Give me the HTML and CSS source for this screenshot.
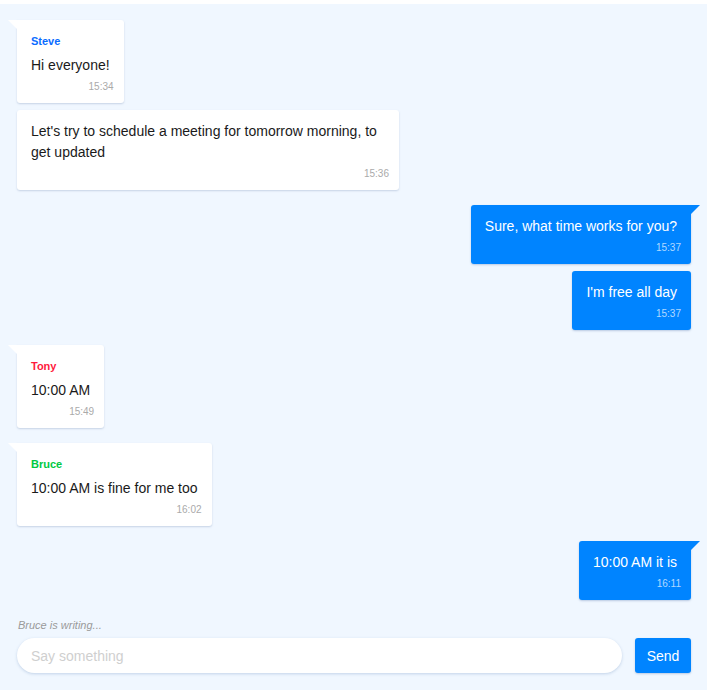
FILE: index.html
```html
<!DOCTYPE html>
<html lang="en">
<head>
<meta charset="utf-8">
<title>Chat</title>
<link rel="stylesheet" href="styles.css">
</head>
<body>
<div class="chat">
  <div class="messages">
    <div class="msg received tail">
      <div class="name steve">Steve</div>
      <div class="text">Hi everyone!</div>
      <div class="time">15:34</div>
    </div>
    <div class="msg received wide follow">
      <div class="text">Let's try to schedule a meeting for tomorrow morning, to get updated</div>
      <div class="time">15:36</div>
    </div>
    <div class="msg sent tail">
      <div class="text">Sure, what time works for you?</div>
      <div class="time">15:37</div>
    </div>
    <div class="msg sent follow">
      <div class="text">I'm free all day</div>
      <div class="time">15:37</div>
    </div>
    <div class="msg received tail">
      <div class="name tony">Tony</div>
      <div class="text">10:00 AM</div>
      <div class="time">15:49</div>
    </div>
    <div class="msg received tail">
      <div class="name bruce">Bruce</div>
      <div class="text">10:00 AM is fine for me too</div>
      <div class="time">16:02</div>
    </div>
    <div class="msg sent tail">
      <div class="text">10:00 AM it is</div>
      <div class="time">16:11</div>
    </div>
  </div>
  <div class="footer">
    <div class="typing">Bruce is writing...</div>
    <div class="composer">
      <input class="input" type="text" placeholder="Say something">
      <button class="send" type="button">Send</button>
    </div>
  </div>
</div>
</body>
</html>
```
FILE: styles.css
```css
html, body {
  margin: 0;
  padding: 0;
  background: #ffffff;
}

body {
  font-family: "Liberation Sans", Arial, Helvetica, sans-serif;
  color: #1a1a1a;
}

.chat {
  margin-top: 4px;
  width: 707px;
  height: 686px;
  background: #f0f7ff;
  display: flex;
  flex-direction: column;
  box-sizing: border-box;
}

.messages {
  flex: 1;
  display: flex;
  flex-direction: column;
  padding: 16px 16px 0 17px;
  overflow: hidden;
}

.msg {
  position: relative;
  box-sizing: border-box;
  max-width: 382px;
  padding: 11px 14px 10px;
  border-radius: 3px;
  margin-top: 15px;
}

.msg:first-child {
  margin-top: 0;
}

.msg.follow {
  margin-top: 7px;
}

.received {
  align-self: flex-start;
  background: #ffffff;
  box-shadow: 0 1px 2px rgba(90, 120, 160, 0.28);
}

.sent {
  align-self: flex-end;
  background: #0084ff;
  color: #ffffff;
  box-shadow: 0 1px 2px rgba(60, 100, 160, 0.3);
}

.msg.tail {
  border-top-left-radius: 0;
}

.sent.tail {
  border-top-left-radius: 3px;
  border-top-right-radius: 0;
}

.received.tail::before {
  content: "";
  position: absolute;
  top: 0;
  left: -9px;
  border-top: 9px solid #ffffff;
  border-left: 9px solid transparent;
}

.sent.tail::before {
  content: "";
  position: absolute;
  top: 0;
  right: -9px;
  border-top: 9px solid #0084ff;
  border-right: 9px solid transparent;
}

.name {
  font-size: 11px;
  font-weight: bold;
  line-height: 13px;
  padding-top: 4px;
  margin-bottom: 7px;
}

.steve { color: #0a6cff; }
.tony { color: #ff1a3d; }
.bruce { color: #00c943; }

.text {
  font-size: 14px;
  line-height: 21px;
}

.time {
  font-size: 10px;
  line-height: 12px;
  margin-top: 5px;
  margin-right: -4px;
  text-align: right;
  color: #aaaaaa;
}

.sent .time {
  color: rgba(255, 255, 255, 0.7);
}

.footer {
  padding: 0 16px 17px 17px;
}

.typing {
  font-size: 11px;
  font-style: italic;
  color: #9a9a9a;
  line-height: 13px;
  margin-left: 1px;
  margin-bottom: 6px;
}

.composer {
  display: flex;
  align-items: center;
  gap: 13px;
}

.input {
  flex: 1;
  height: 35px;
  box-sizing: border-box;
  border: none;
  border-radius: 18px;
  background: #ffffff;
  padding: 0 14px;
  font-family: "Liberation Sans", Arial, sans-serif;
  font-size: 14px;
  color: #333333;
  box-shadow: 0 1px 3px rgba(90, 130, 180, 0.3);
  outline: none;
}

.input::placeholder {
  color: #cfcfcf;
}

.send {
  width: 56px;
  height: 35px;
  border: none;
  border-radius: 3px;
  background: #0084ff;
  color: #ffffff;
  font-family: "Liberation Sans", Arial, sans-serif;
  font-size: 14px;
  padding: 0;
  box-shadow: 0 1px 2px rgba(60, 100, 160, 0.3);
}
```
